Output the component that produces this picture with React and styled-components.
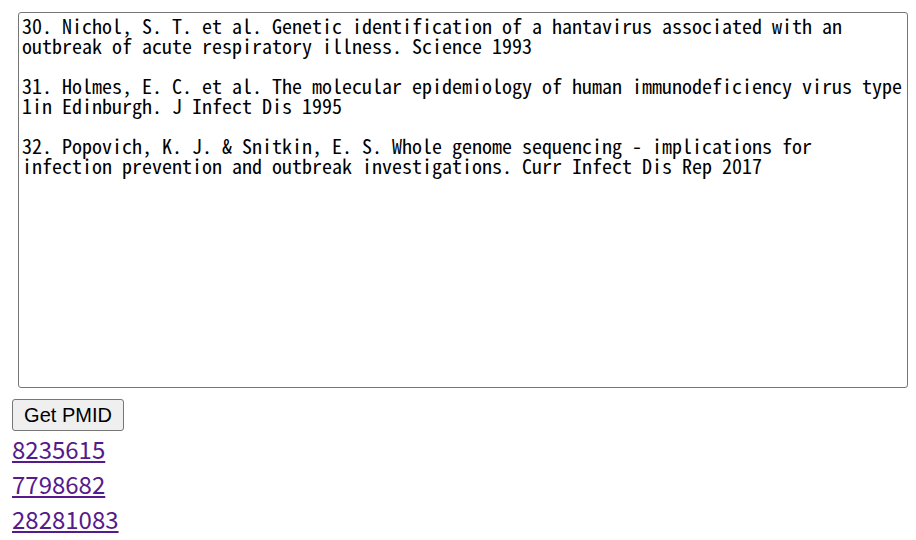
import React, { useState } from 'react';
import styled, { createGlobalStyle } from 'styled-components';

const GlobalStyle = createGlobalStyle`
    html, body {
        margin : 0;
        padding : 0;
        background : #FFFFFF;
    }
`

const initialText = `30. Nichol, S. T. et al. Genetic identification of a hantavirus associated with an outbreak of acute respiratory illness. Science 1993

31. Holmes, E. C. et al. The molecular epidemiology of human immunodeficiency virus type 1in Edinburgh. J Infect Dis 1995

32. Popovich, K. J. & Snitkin, E. S. Whole genome sequencing - implications for infection prevention and outbreak investigations. Curr Infect Dis Rep 2017`

const pmids = ["8235615", "7798682", "28281083"];

const App = () => {
    const [text, setText] = useState(initialText);

    return (
        <PageWrap>
            <GlobalStyle/>
            <RefInput
                value={text}
                onChange={(e) => setText(e.target.value)}
                spellCheck={false}
            />
            <GetBtn type="button">Get PMID</GetBtn>
            {pmids.map((id) => (
                <PmidLink key={id} href={`#${id}`}>{id}</PmidLink>
            ))}
        </PageWrap>
    );
};

const PageWrap = styled.div`
    display : flex;
    flex-direction : column;
    align-items : flex-start;
    padding : 12px;
`
const RefInput = styled.textarea`
    box-sizing : border-box;
    width : 890px;
    height : 376px;
    margin : 0 0 11px 6px;
    padding : 3px 3px 2px;
    border : 1px solid #767676;
    border-radius : 3px;
    font-family : "Noto Sans Mono CJK JP", "Noto Sans CJK JP", monospace;
    font-size : 20px;
    line-height : 20px;
    color : #000000;
    resize : none;
    outline : none;
`
const GetBtn = styled.button`
    box-sizing : border-box;
    width : 112px;
    height : 32px;
    padding : 0;
    border : 1px solid #767676;
    border-radius : 3px;
    background : #EFEFEF;
    font-family : "Liberation Sans", Arial, sans-serif;
    font-size : 20px;
    color : #000000;
`
const PmidLink = styled.a`
    display : block;
    font-family : "Noto Sans CJK JP", "Noto Sans", sans-serif;
    font-size : 24px;
    color : #551A8B;
    text-decoration : underline;
`

export default App;
